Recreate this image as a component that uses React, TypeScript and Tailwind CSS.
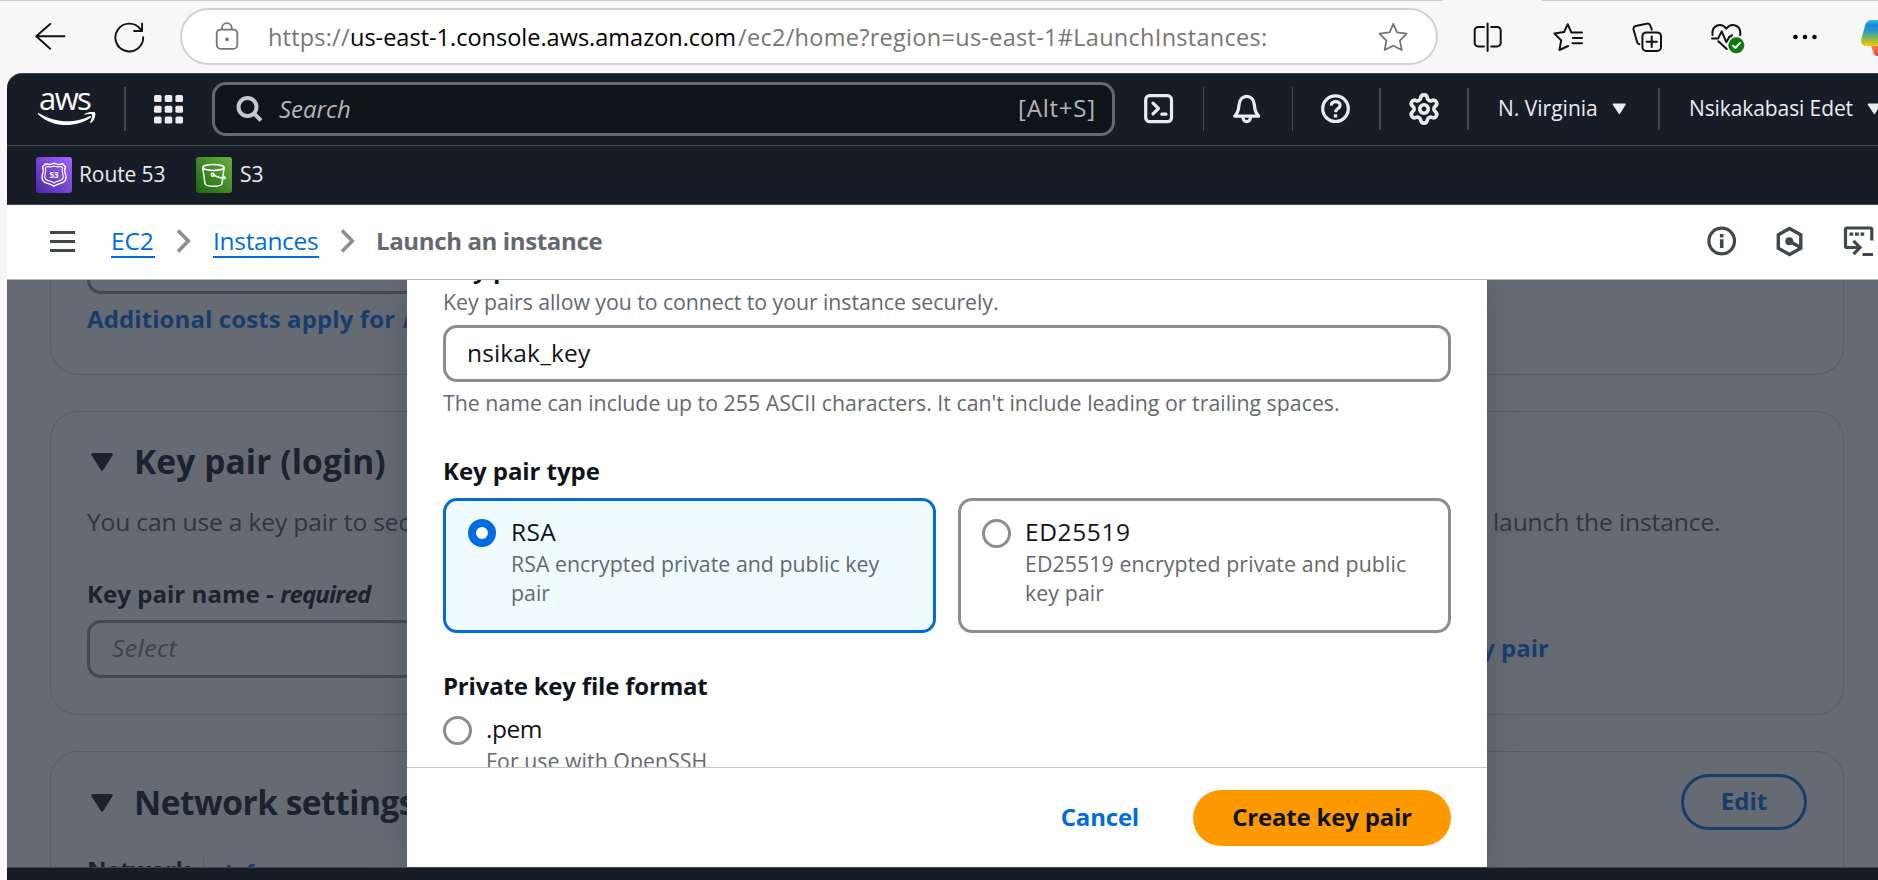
import type { ReactNode } from "react";
import { Settings } from "lucide-react";

function Svg({ w, h, className = "", sw = 2, children }: { w: number; h: number; className?: string; sw?: number; children: ReactNode }) {
  return (
    <svg
      width={w}
      height={h}
      viewBox={`0 0 ${w} ${h}`}
      className={`shrink-0 ${className}`}
      fill="none"
      stroke="currentColor"
      strokeWidth={sw}
      strokeLinecap="round"
      strokeLinejoin="round"
    >
      {children}
    </svg>
  );
}

function BrowserBar() {
  return (
    <div className="flex h-[73px] shrink-0 flex-col bg-[#f7f7f7] text-[#111]">
      <div className="flex h-px">
        <div className="w-[1443px] bg-[#cccccc]" />
        <div className="w-[99px]" />
        <div className="flex-1 bg-[#cccccc]" />
      </div>
      <div className="flex h-[72px] items-start">
        <Svg w={31} h={30} className="mt-[21px] ml-[35px]" sw={1.9}>
          <path d="M1.2 14.3H29.5M15.2 2 1.2 14.3l14 12.4" />
        </Svg>
        <Svg w={32} h={31} className="mt-[21px] ml-[48px]" sw={1.9}>
          <path d="M29.2 15.3A13.9 13.9 0 1 1 26.6 7.4M28.1 1.5V9H20" />
        </Svg>
        <div className="mt-[7px] ml-[34px] flex h-[57px] w-[1258px] shrink-0 items-start rounded-full border-2 border-[#d2d2d2] bg-white text-[#767676]">
          <Svg w={25} h={29} className="mt-[12px] ml-[33px]" sw={1.8}>
            <rect x="1.7" y="7.6" width="20.6" height="19.2" rx="3.8" />
            <path d="M7 7.2V6a4.9 4.9 0 0 1 9.8 0V7.2" />
            <circle cx="12" cy="17.3" r="1" />
          </Svg>
          <div className="mt-[10px] ml-[28px] flex text-[23.5px] leading-[34px] whitespace-nowrap">
            <span className="w-[82px] tracking-[0.2px]">https://</span>
            <span className="w-[388px] text-black">us-east-1.console.aws.amazon.com</span>
            <span className="tracking-[0.29px]">/ec2/home?region=us-east-1#LaunchInstances:</span>
          </div>
          <Svg w={31} h={30} className="mt-[12px] mr-[27px] ml-auto" sw={1.8}>
            <path d="M15.3 1.8 19 10.3l9.6 1.4-6.7 6.9 1.8 9.4-8.4-4.2-8.6 4.2L8.4 18.6 1.6 11.7l10-1.4z" />
          </Svg>
        </div>
        <Svg w={31} h={31} className="mt-[21px] ml-[35px]" sw={2}>
          <path d="M11 5H5.2a3.5 3.5 0 0 0-3.5 3.5v12.4a3.5 3.5 0 0 0 3.5 3.5H11M18.2 5h6a3.5 3.5 0 0 1 3.5 3.5v12.4a3.5 3.5 0 0 1-3.5 3.5h-6M14.6 1.5v27.4" />
        </Svg>
        <Svg w={31} h={31} className="mt-[21px] ml-[49px]" sw={2}>
          <path d="M29 10.6H18.4L14.7 2.2 11.1 10.1 1.4 11.5l6.8 6.9-1.8 9.6 8.8-4M19.8 16H29M19.4 21.3H29" />
        </Svg>
        <Svg w={31} h={31} className="mt-[21px] ml-[48px]" sw={2}>
          <path d="M7.3 22.2C6 22 5.4 21 5.1 20L1.6 7.7c-.5-2 .4-3.2 2-3.7L14.6 1.7c2-.5 3.2.4 3.7 1.8L19.8 7.6" />
          <rect x="10.4" y="10.4" width="18.6" height="18.6" rx="4" />
          <path d="M19.7 14.6v10.4M14.5 19.8h10.4" />
        </Svg>
        <Svg w={35} h={33} className="mt-[21px] ml-[48px]" sw={2}>
          <path d="M1.6 13C.2 4 9.5-.6 15.3 6.6 21-.6 30.7 4 29.1 13M1 16.6h6L10.7 9.4l4.6 10.8 3.2-5.8h1.5l1-1.4M7.4 19.2l8.3 7.8" />
          <circle cx="25.3" cy="23.3" r="8" fill="#0e7a10" stroke="none" />
          <path d="m22 23.7 2.4 2.3 4.6-5" stroke="#fff" strokeWidth="1.9" />
        </Svg>
        <Svg w={26} h={10} className="mt-[31px] ml-[46px]">
          <g fill="#000" stroke="none">
            <circle cx="3.5" cy="5" r="2.3" />
            <circle cx="13" cy="5" r="2.3" />
            <circle cx="22.5" cy="5" r="2.3" />
          </g>
        </Svg>
        <Svg w={18} h={40} className="mt-[17px] ml-[43px]">
          <defs>
            <linearGradient id="co" x1="0" y1="0" x2="0" y2="1">
              <stop offset="0" stopColor="#28c4e8" />
              <stop offset="0.2" stopColor="#1b82dc" />
              <stop offset="0.45" stopColor="#2f9fc0" />
              <stop offset="0.7" stopColor="#7dba50" />
              <stop offset="1" stopColor="#fbc707" />
            </linearGradient>
            <linearGradient id="cr" x1="0" y1="0" x2="1" y2="1">
              <stop offset="0" stopColor="#fd8a48" />
              <stop offset="1" stopColor="#e8414a" />
            </linearGradient>
          </defs>
          <path d="M10 28H18V38H16.5C13.5 38 12.5 35.5 11.6 32.5Z" fill="url(#cr)" stroke="none" />
          <path d="M18 2H10C6.5 2 5 4.5 4 8L.6 20c-1.2 4.5.4 8 4.4 8h8c2.5 0 4-1 5-3Z" fill="url(#co)" stroke="none" />
        </Svg>
      </div>
    </div>
  );
}

function Caret() {
  return (
    <svg width="15" height="12" viewBox="0 0 15 12" className="shrink-0" fill="#ebebf0">
      <path d="M1.6.6h11.3q1.4 0 .7 1.2L8.2 10.5q-.8 1-1.6 0L.8 1.8Q.2.6 1.6.6z" />
    </svg>
  );
}

function ConsoleHeader() {
  const cells = [0, 10.7, 21.4];
  return (
    <div className="shrink-0 rounded-tl-[15px] border-t border-[#424650] bg-[#161d26] text-[#ebebf0]">
      <div className="flex h-[71px] items-center pb-px">
        <div className="mt-[-2px] ml-[30px] flex w-[60px] shrink-0 flex-col text-white">
          <div className="h-[22px] pl-[2px] text-[31px] leading-[17px] font-medium tracking-[-1.6px]">aws</div>
          <svg width="60" height="15" viewBox="0 0 60 15" fill="#fff">
            <path d="M2 1.2C17 10.5 37 12 52.5 4.2c1.5-.6 2.3.6 1 1.6C38 16.5 15 15.5 1.3 2.4.6 1.5 1 .6 2 1.2z" />
            <path d="M47.5 2C50.5-.2 57-.6 58 .6s0 7.4-3.8 10.2c-.9.6-1.3.1-1-.7C54.5 7 55.7 3.5 54.8 2.6c-.9-.9-4.3-.4-6.4-.1-1.2.1-1.5-.1-.9-.5z" />
          </svg>
        </div>
        <div className="ml-[27px] h-[44px] w-[2px] shrink-0 bg-[#424650]" />
        <svg width="29" height="29" viewBox="0 0 29 29" className="ml-[28px] shrink-0" fill="#ebebf0">
          {cells.map((y) => cells.map((x) => <rect key={`${x}-${y}`} x={x} y={y} width="7.6" height="7.1" rx="1.6" />))}
        </svg>
        <div className="ml-[29px] flex h-[54px] w-[903px] shrink-0 items-center rounded-[14px] border-[3px] border-[#656871] bg-[#0f141a] text-[24px]">
          <Svg w={27} h={27} className="ml-[21px] text-[#c6c6cd]" sw={4}>
            <circle cx="11.5" cy="11" r="9" />
            <path d="m18.5 18 6.5 6.5" strokeLinecap="butt" />
          </Svg>
          <span className="mt-[-1px] ml-[16px] text-[#b4b4bb] italic">Search</span>
          <span className="mt-[-2px] mr-[15px] ml-auto w-[79px] tracking-[0.8px] text-[#b4b4bb]">[Alt+S]</span>
        </div>
        <Svg w={30} h={30} className="ml-[29px]" sw={3.2}>
          <rect x="1.7" y="1.7" width="25.8" height="26" rx="4" />
          <path d="m9 9.2 5.5 5.3L9 19.8M17.8 20.2H22" />
        </Svg>
        <div className="ml-[29px] h-[44px] w-px shrink-0 bg-[#424650]" />
        <Svg w={30} h={30} className="ml-[28px]" sw={3.2}>
          <path d="M2.7 22.2H26.7C23.3 19 22.7 15.5 22.3 10.5 21.8 5 18.5 2.3 14.7 2.3S7.6 5 7.1 10.5c-.4 5-1 8.5-4.4 11.7z" />
          <path d="M11 23.5c0 5.5 7.4 5.5 7.4 0" />
        </Svg>
        <div className="ml-[30px] h-[44px] w-px shrink-0 bg-[#424650]" />
        <Svg w={30} h={30} className="ml-[28px]" sw={3.2}>
          <circle cx="14.5" cy="14.7" r="12.8" />
          <path d="M10.2 11.6c.1-5.5 8.9-5.3 8.9-.2 0 3-4.5 3.2-4.5 6.8" strokeLinecap="butt" />
          <path d="M12.8 21.9h3.4" strokeLinecap="butt" />
        </Svg>
        <div className="ml-[28px] h-[42px] w-[2px] shrink-0 bg-[#424650]" />
        <Settings size={34} strokeWidth={2.6} className="ml-[26px] shrink-0" />
        <div className="ml-[26px] h-[42px] w-[2px] shrink-0 bg-[#424650]" />
        <div className="mt-[-1px] ml-[29px] w-[114px] shrink-0 text-[21px] font-medium whitespace-nowrap">N. Virginia</div>
        <Caret />
        <div className="ml-[31px] h-[42px] w-[2px] shrink-0 bg-[#424650]" />
        <div className="mt-[-1px] ml-[29px] w-[178px] shrink-0 text-[21px] font-medium tracking-[-0.1px] whitespace-nowrap">Nsikakabasi Edet</div>
        <Caret />
      </div>
      <div className="flex h-[60px] items-center border-y border-[#424650] pl-[29px] text-[21px] font-medium">
        <svg width="36" height="36" viewBox="0 0 36 36" fill="none" stroke="#fff" strokeWidth="1.4" strokeLinejoin="round">
          <defs>
            <linearGradient id="r53" x1="0" y1="1" x2="1" y2="0">
              <stop offset="0" stopColor="#4d27a8" />
              <stop offset="1" stopColor="#a166ff" />
            </linearGradient>
          </defs>
          <rect width="36" height="36" rx="3" fill="url(#r53)" stroke="none" />
          <path d="M9.5 6.7c2.7 1.4 5.5 1 8.5-.5 3 1.5 5.8 1.9 8.5.5l3 3.2c-1.8 3.5-.8 5.5.2 8 1.3 4-.7 7-4.5 8.2-3 .9-5.2 1.6-7.2 3.2-2-1.6-4.2-2.3-7.2-3.2-3.8-1.2-5.8-4.2-4.5-8.2 1-2.5 2-4.5.2-8z" />
          <path d="M10.7 9.5c2.8.8 5 .5 7.3-.6 2.3 1.1 4.5 1.4 7.3.6l1.2 1.3c-.8 2.7-.4 4.4.5 7 .9 3-.6 5-3.2 5.8-2.4.8-4.2 1.4-5.8 2.4-1.6-1-3.4-1.6-5.8-2.4-2.6-.8-4.1-2.8-3.2-5.8.9-2.6 1.3-4.3.5-7z" strokeWidth="1.1" />
          <text x="18" y="21.3" fill="#fff" stroke="none" fontSize="8" fontWeight="700" textAnchor="middle">53</text>
        </svg>
        <span className="ml-[7px] w-[88px] tracking-[-0.1px] whitespace-nowrap">Route 53</span>
        <svg width="36" height="36" viewBox="0 0 36 36" className="ml-[29px]" fill="none" stroke="#fff" strokeWidth="1.5" strokeLinejoin="round">
          <defs>
            <linearGradient id="s3" x1="0" y1="1" x2="1" y2="0">
              <stop offset="0" stopColor="#1b660f" />
              <stop offset="1" stopColor="#6cae3e" />
            </linearGradient>
          </defs>
          <rect width="36" height="36" rx="3" fill="url(#s3)" stroke="none" />
          <ellipse cx="17.4" cy="10.5" rx="10.7" ry="2.9" />
          <path d="M6.7 10.5 9 26.5c.5 3.7 16.5 3.7 17 0l2.1-16M17.5 18c4 2 8.5 3.4 11.5 3.5 1-.7-.6-2-2-2.6" />
          <circle cx="16.7" cy="17.7" r="1.5" />
        </svg>
        <span className="ml-[8px]">S3</span>
      </div>
    </div>
  );
}

function Chevron({ className }: { className: string }) {
  return (
    <Svg w={16} h={26} className={className} sw={3.6}>
      <path d="M2 2.5 12.3 13 2 23.5" strokeLinecap="butt" strokeLinejoin="miter" />
    </Svg>
  );
}

function Breadcrumbs() {
  return (
    <div className="flex h-[75px] shrink-0 items-center border-b border-[#b6b6be] bg-white pb-[2px] text-[24.5px] text-[#424650]">
      <div className="ml-[43px] flex w-[25px] flex-col gap-[6px]">
        <div className="h-[3px] bg-[#424650]" />
        <div className="h-[3px] bg-[#424650]" />
        <div className="h-[3px] bg-[#424650]" />
      </div>
      <div className="ml-[36px] h-[33px] w-[44px] border-b-2 border-[#006ce0] leading-[32px] tracking-[-0.1px] text-[#006ce0]">EC2</div>
      <Chevron className="ml-[21px] text-[#8c8c94]" />
      <div className="ml-[21px] h-[33px] w-[106px] border-b-2 border-[#006ce0] leading-[32px] tracking-[-0.3px] text-[#006ce0]">Instances</div>
      <Chevron className="ml-[21px] text-[#8c8c94]" />
      <div className="ml-[20px] w-[240px] text-[24px] leading-[32px] font-bold tracking-[-0.36px] whitespace-nowrap text-[#656871]">Launch an instance</div>
      <Svg w={30} h={30} className="ml-auto" sw={3.2}>
        <circle cx="14.7" cy="15" r="12.8" />
        <path d="M14.7 13.2v8.8M14.7 8v3.4" strokeLinecap="butt" strokeWidth="3.6" />
      </Svg>
      <Svg w={27} h={31} className="ml-[39px]" sw={3.4}>
        <path d="m13.5 2.5 11.3 6.3v13.4L13.5 28.5 2.3 22.2V8.8z" strokeLinejoin="miter" />
        <circle cx="13.3" cy="15.3" r="4" fill="currentColor" stroke="none" />
        <path d="m13.3 15.3 10.5 5.7" />
      </Svg>
      <Svg w={31} h={31} className="mr-[4px] ml-[40px]" sw={3.2}>
        <path d="M28.8 14.5V3.5a1.5 1.5 0 0 0-1.5-1.5H4a1.5 1.5 0 0 0-1.5 1.5v16.5a1.5 1.5 0 0 0 1.5 1.5H16M10.5 14.8l6.5 6.7-6.5 6.7M19.5 28.5H30" strokeLinecap="butt" strokeLinejoin="miter" />
        <path d="M6.5 8.2h3.7M12 8.2h3.7M17.5 8.2h3.7" strokeLinecap="butt" />
      </Svg>
    </div>
  );
}

function SectionCaret() {
  return (
    <svg width="22" height="19" viewBox="0 0 22 19" className="mt-[2px] ml-[4px] shrink-0" fill="#1c222e">
      <path d="M1.8 0h18.4q2.3.2 1.3 2.2L12.3 16.8q-1.3 1.8-2.6 0L.5 2.2Q-.5.2 1.8 0z" />
    </svg>
  );
}

function PageBehind() {
  return (
    <div className="flex flex-col gap-[36px] pr-[34px] pl-[43px] whitespace-nowrap text-[#1c222e]">
      <div className="h-[95px] shrink-0 rounded-b-[28px] border-x border-b border-[#575c67] px-[36px]">
        <div className="h-[14px] w-[900px] rounded-b-[14px] border-x-[3px] border-b-[3px] border-[#434853]" />
        <div className="mt-[9px] text-[24px] leading-[32px] font-bold tracking-[0.1px] text-[#193d6b]">
          Additional costs apply for <span className="ml-px">AMIs</span>
        </div>
      </div>
      <div className="h-[304px] shrink-0 rounded-[28px] border border-[#575c67] px-[36px] pt-[27px]">
        <div className="flex h-[44px] items-center">
          <SectionCaret />
          <span className="ml-[21px] text-[33.5px] font-bold tracking-[0.1px]">Key pair (login)</span>
        </div>
        <div className="mt-[23px] flex text-[24.5px] leading-[32px] text-[#2f3541]">
          <span className="w-[1406px] tracking-[-0.13px]">You can use a key pair to securely</span>
          <span className="tracking-[-0.08px]">launch the instance.</span>
        </div>
        <div className="mt-[40px] text-[24px] leading-[32px] font-bold">
          <span className="tracking-[0.05px]">Key pair name - </span>
          <em className="tracking-[-0.85px]">required</em>
        </div>
        <div className="mt-[10px] flex items-center">
          <div className="h-[58px] w-[900px] rounded-[14px] border-[3px] border-[#434853] pl-[22px] text-[24.5px] leading-[50px] tracking-[0.5px] text-[#3c424d] italic">Select</div>
          <div className="mt-[-2px] flex w-[562px] justify-end text-[24px] leading-[32px] font-bold text-[#193d6b]">Create new key pair</div>
        </div>
      </div>
      <div className="h-[200px] shrink-0 rounded-t-[28px] border border-[#575c67] px-[36px] pt-[22px]">
        <div className="flex h-[56px] items-center">
          <SectionCaret />
          <span className="ml-[21px] text-[33.5px] font-bold tracking-[-0.5px]">Network settings</span>
          <div className="ml-auto h-[56px] w-[126px] rounded-full border-[3px] border-[#193d6b] text-center text-[24px] leading-[48px] font-bold text-[#193d6b]">Edit</div>
        </div>
        <div className="mt-[24px] flex h-[32px] items-center text-[24px] font-bold">
          <span className="w-[116px] tracking-[-0.3px]">Network</span>
          <span className="h-[28px] w-px bg-[#575c67]" />
          <span className="mt-[3px] ml-[21px] text-[21.3px] text-[#193d6b]">Info</span>
        </div>
      </div>
    </div>
  );
}

function Radio({ checked = false }: { checked?: boolean }) {
  return checked ? (
    <span className="h-[28px] w-[28px] shrink-0 rounded-full border-[8px] border-[#006ce0] bg-white" />
  ) : (
    <span className="h-[29px] w-[29px] shrink-0 rounded-full border-[3px] border-[#8c8c94] bg-white" />
  );
}

function KeyPairModal() {
  return (
    <div className="absolute inset-y-0 left-[400px] flex w-[1080px] flex-col bg-white text-[#0f141a] shadow-[0_0_36px_rgba(60,65,85,0.35)]">
      <div className="h-[487px] overflow-hidden px-[36px] text-[21.3px] leading-[28px] whitespace-nowrap text-[#656871]">
        <div className="mt-[-27px] text-[24px] leading-[32px] font-bold text-[#0f141a]">Key pair name</div>
        <div className="mt-[3px] tracking-[-0.06px]">Key pairs allow you to connect to your instance securely.</div>
        <div className="mt-[9px] h-[57px] rounded-[14px] border-[3px] border-[#8c8c94] pl-[21px] text-[24.5px] leading-[50px] tracking-[0.15px] text-[#0f141a]">nsikak_key</div>
        <div className="mt-[7px] tracking-[0.015px]">The name can include up to 255 ASCII characters. It can't include leading or trailing spaces.</div>
        <div className="mt-[38px] text-[24px] leading-[32px] font-bold tracking-[-0.06px] text-[#0f141a]">Key pair type</div>
        <div className="mt-[11px] flex h-[135px] gap-[22px] whitespace-normal">
          <div className="flex w-[493px] rounded-[14px] border-[3px] border-[#006ce0] bg-[#f0fbff] pt-[18px] pl-[22px]">
            <Radio checked />
            <div className="ml-[15px] w-[385px]">
              <div className="mt-[-4px] text-[24.5px] leading-[34px] tracking-[0.3px] text-[#0f141a]">RSA</div>
              <div className="leading-[29px] tracking-[0.03px]">RSA encrypted private and public key pair</div>
            </div>
          </div>
          <div className="flex w-[493px] rounded-[14px] border-[3px] border-[#8c8c94] pt-[18px] pl-[21px]">
            <Radio />
            <div className="ml-[14px] w-[400px]">
              <div className="mt-[-4px] text-[24.5px] leading-[34px] tracking-[0.6px] text-[#0f141a]">ED25519</div>
              <div className="leading-[29px] tracking-[0.1px]">ED25519 encrypted private and public key pair</div>
            </div>
          </div>
        </div>
        <div className="mt-[37px] text-[24px] leading-[32px] font-bold tracking-[-0.2px] text-[#0f141a]">Private key file format</div>
        <div className="mt-[14px] flex">
          <Radio />
          <div className="ml-[14px]">
            <div className="mt-[-4px] text-[24.5px] leading-[34px] tracking-[-0.5px] text-[#0f141a]">.pem</div>
            <div className="mt-[1px] tracking-[0.04px]">For use with OpenSSH</div>
          </div>
        </div>
      </div>
      <div className="flex h-[100px] items-center justify-end border-t border-[#c6c6cd] pt-px pr-[36px] text-[24px] font-bold">
        <span className="mt-[-2px] mr-[54px] tracking-[-0.2px] text-[#006ce0]">Cancel</span>
        <div className="h-[56px] w-[258px] rounded-full bg-[#ff9900] text-center leading-[54px] tracking-[-0.2px]">Create key pair</div>
      </div>
    </div>
  );
}

export default function App() {
  return (
    <div className="flex h-[880px] w-[1878px] flex-col overflow-hidden bg-[#f7f7f7] font-['Open_Sans','Noto_Sans',sans-serif]">
      <BrowserBar />
      <div className="ml-[7px] flex flex-1 flex-col">
        <ConsoleHeader />
        <Breadcrumbs />
        <div className="relative h-[587px] shrink-0 overflow-hidden bg-[#656a73]">
          <PageBehind />
          <KeyPairModal />
        </div>
        <div className="h-[13px] shrink-0 border-t border-[#424650] bg-[#161d26]" />
      </div>
    </div>
  );
}
